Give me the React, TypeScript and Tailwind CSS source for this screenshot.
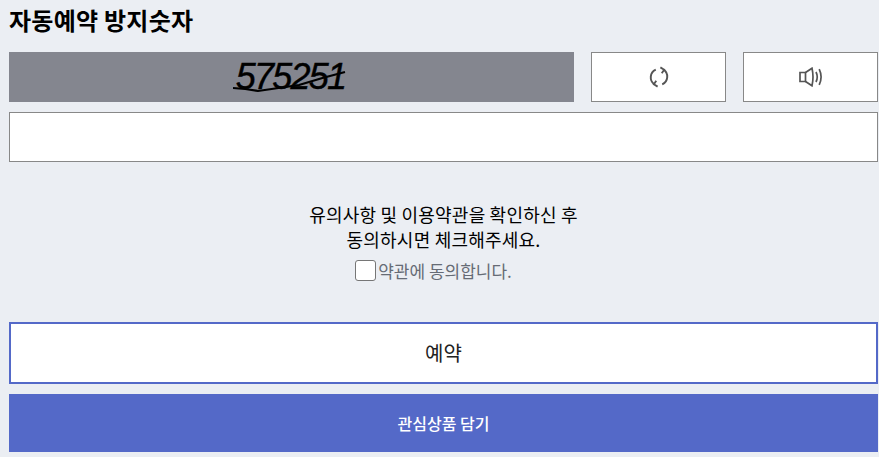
import React from 'react';

const font = { fontFamily: '"Noto Sans CJK KR", "Liberation Sans", sans-serif' };

function RefreshIcon() {
    return (
        <svg width="22" height="22" viewBox="0 0 24 24" fill="none" stroke="#555" strokeWidth="2.1">
            <path d="M8.5 4 A9.2 9.2 0 0 0 7 20" />
            <path d="M15.5 20 A9.2 9.2 0 0 0 17 4" />
            <path d="M13.5 1.5 L17.6 4 L15 8" strokeWidth="2" />
            <path d="M10.5 22.5 L6.4 20 L9 16" strokeWidth="2" />
        </svg>
    );
}

function SpeakerIcon() {
    return (
        <svg className="ml-[2px]" width="25" height="20" viewBox="0 0 25 20" fill="none" stroke="#555" strokeWidth="1.7">
            <path d="M1 5.5 H6.5 V14.5 H1 Z" />
            <path d="M6.5 5.5 L13 1.2 Q15 10 13 18.8 L6.5 14.5" />
            <path d="M17 5 Q19.5 10 17 15" />
            <path d="M20.2 2.2 Q24 10 20.2 17.8" />
        </svg>
    );
}

export default function App() {
    return (
        <div className="w-[879px] h-[457px] overflow-hidden bg-[#ebeef3] pl-[9px] pr-px text-black" style={font}>
            {/* Title */}
            <h2 className="h-[52px] text-[24px] leading-[40px] font-bold tracking-[0.25px]">자동예약 방지숫자</h2>

            {/* Captcha row */}
            <div className="flex gap-[17px] h-[50px]">
                <div className="relative w-[565px] bg-[#84868f] flex items-center justify-center overflow-hidden">
                    <span className="italic text-[36px] leading-none tracking-[-1.8px] text-black pr-[2px] [-webkit-text-stroke:0.4px_black]" style={{ fontFamily: '"Liberation Sans", sans-serif' }}>
                        575251
                    </span>
                    <svg className="absolute left-[224px] top-[8px]" width="116" height="34" viewBox="0 0 116 34" fill="none" stroke="#000" strokeWidth="2.2">
                        <path d="M0 28 Q14 29 25 31 L66 25 Q88 18 112 12" />
                    </svg>
                </div>
                <button className="w-[135px] bg-white border border-[#888] flex items-center justify-center">
                    <RefreshIcon />
                </button>
                <button className="w-[135px] bg-white border border-[#888] flex items-center justify-center">
                    <SpeakerIcon />
                </button>
            </div>

            {/* Input */}
            <input className="block mt-[10px] w-[869px] h-[50px] bg-white border border-[#888]" />

            {/* Notice */}
            <div className="h-[160px] pt-[40px] flex flex-col items-center text-center">
                <p className="text-[18px] leading-[25px] w-full tracking-[0.2px]">
                    유의사항 및 이용약관을 확인하신 후<br />동의하시면 체크해주세요.
                </p>
                <label className="mt-[8px] mr-[20px] flex items-center gap-[2px] text-[17px] leading-[21px] text-[#666b75]">
                    <span className="block w-[21px] h-[21px] bg-white border border-[#767676] rounded-[3px]" />
                    약관에 동의합니다.
                </label>
            </div>

            {/* Buttons */}
            <button className="block w-[869px] h-[62px] bg-white border-2 border-[#5469c8] text-[20px] text-[#222]">예약</button>
            <button className="block mt-[10px] w-[869px] h-[58px] bg-[#5469c8] text-white text-[16px] font-medium">관심상품 담기</button>
        </div>
    );
}
